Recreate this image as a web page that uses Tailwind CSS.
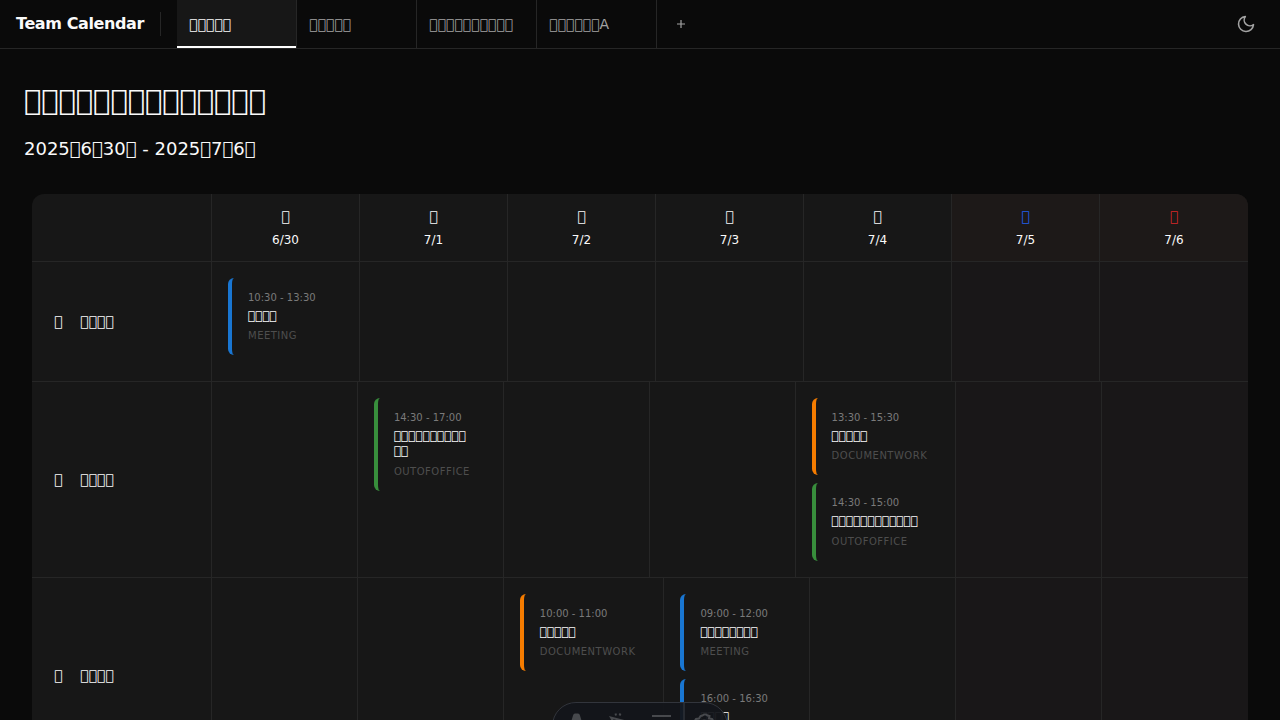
<!DOCTYPE html>
<html lang="ja">
<head>
<meta charset="utf-8">
<title>Team Calendar</title>
<script src="https://cdn.jsdelivr.net/npm/@tailwindcss/browser@4"></script>
</head>
<body class="h-[720px] overflow-hidden bg-[#0a0a0a] font-['DejaVu_Sans',sans-serif] text-[#fafafa]">
<header class="flex h-[49px] items-stretch border-b border-[#262626]">
  <div class="flex w-[177px] items-center pl-4">
    <h1 class="w-36 text-base font-bold tracking-tight">Team Calendar</h1>
    <span class="h-6 w-px bg-[#262626]"></span>
  </div>
  <nav class="flex text-sm text-[#a3a3a3]">
    <div class="relative flex w-[120px] items-center border-r border-[#262626] bg-[#171717] pl-3 text-[#fafafa]">&#x31400;&#x31400;&#x31400;&#x31400;&#x31400;<span class="absolute inset-x-0 bottom-0 h-0.5 bg-white"></span></div>
    <div class="flex w-[120px] items-center border-r border-[#262626] pl-3">&#x31400;&#x31400;&#x31400;&#x31400;&#x31400;</div>
    <div class="flex w-[120px] items-center border-r border-[#262626] pl-3">&#x31400;&#x31400;&#x31400;&#x31400;&#x31400;&#x31400;&#x31400;&#x31400;&#x31400;&#x31400;</div>
    <div class="flex w-[120px] items-center border-r border-[#262626] pl-3">&#x31400;&#x31400;&#x31400;&#x31400;&#x31400;&#x31400;A</div>
    <button class="flex w-12 items-center justify-center"><svg class="size-3.5" viewBox="0 0 14 14" stroke="currentColor" stroke-width="1.2"><path d="M7 3v8M3 7h8"/></svg></button>
  </nav>
  <button class="mr-6 ml-auto text-[#a3a3a3]"><svg class="size-5" viewBox="0 0 24 24" fill="none" stroke="currentColor" stroke-width="1.9" stroke-linecap="round" stroke-linejoin="round"><path d="M21 12.79A9 9 0 1 1 11.21 3 7 7 0 0 0 21 12.79z"/></svg></button>
</header>
<main>
  <h2 class="mt-[33px] ml-6 h-9 text-[28.8px] leading-9">&#x31400;&#x31400;&#x31400;&#x31400;&#x31400;&#x31400;&#x31400;&#x31400;&#x31400;&#x31400;&#x31400;&#x31400;&#x31400;&#x31400;</h2>
  <p class="mt-[17px] ml-6 h-7 text-lg leading-7">2025&#x31400;6&#x31400;30&#x31400; - 2025&#x31400;7&#x31400;6&#x31400;</p>
  <section class="mx-8 mt-[31px] overflow-hidden rounded-t-xl bg-[#171717]">
    <div class="grid h-[68px] grid-cols-[180px_repeat(7,148px)] border-b border-[#262626] text-center text-xs *:border-r *:border-[#262626] *:pt-3 *:last:border-r-0">
      <div></div>
      <div><p class="mb-1.5 text-sm">&#x31400;</p>6/30</div>
      <div><p class="mb-1.5 text-sm">&#x31400;</p>7/1</div>
      <div><p class="mb-1.5 text-sm">&#x31400;</p>7/2</div>
      <div><p class="mb-1.5 text-sm">&#x31400;</p>7/3</div>
      <div><p class="mb-1.5 text-sm">&#x31400;</p>7/4</div>
      <div class="bg-[#1d1918]"><p class="mb-1.5 text-sm text-[#2360ee]">&#x31400;</p>7/5</div>
      <div class="bg-[#1d1918]"><p class="mb-1.5 text-sm text-[#d62828]">&#x31400;</p>7/6</div>
    </div>
    <div class="grid h-[120px] grid-cols-[180px_repeat(7,148px)] border-b border-[#262626] *:border-r *:border-[#262626] *:last:border-r-0">
      <div class="flex items-center gap-[17.6px] pb-0.5 pl-[22px] text-sm"><span>&#x31400;</span><span>&#x31400;&#x31400;&#x31400;&#x31400;</span></div>
      <div class="p-4">
        <article class="h-[77px] rounded-md border-l-4 border-[#1976d2] pt-3 pl-4">
          <p class="text-[10px] leading-[15px] text-[#7a7a7a]">10:30 - 13:30</p><p class="mt-1 text-xs leading-[15px]">&#x31400;&#x31400;&#x31400;&#x31400;</p><p class="mt-1 text-[10px] leading-[15px] tracking-[0.5px] text-[#4e4e4e]">MEETING</p>
        </article>
      </div>
      <div></div><div></div><div></div><div></div><div class="bg-[#191718]"></div><div class="bg-[#191718]"></div>
    </div>
    <div class="grid h-[196px] grid-cols-[180px_145.9px_145.9px_145.9px_145.9px_160.6px_145.9px_145.9px] border-b border-[#262626] *:border-r *:border-[#262626] *:last:border-r-0">
      <div class="flex items-center gap-[17.6px] pb-0.5 pl-[22px] text-sm"><span>&#x31400;</span><span>&#x31400;&#x31400;&#x31400;&#x31400;</span></div>
      <div></div>
      <div class="p-4">
        <article class="h-[93px] rounded-md border-l-4 border-[#388e3c] pt-3 pl-4">
          <p class="text-[10px] leading-[15px] text-[#7a7a7a]">14:30 - 17:00</p><p class="mt-1 text-xs leading-[15px]">&#x31400;&#x31400;&#x31400;&#x31400;&#x31400;&#x31400;&#x31400;&#x31400;&#x31400;&#x31400;<br>&#x31400;&#x31400;</p><p class="mt-[5px] text-[10px] leading-[15px] tracking-[0.5px] text-[#4e4e4e]">OUTOFOFFICE</p>
        </article>
      </div>
      <div></div><div></div>
      <div class="flex flex-col gap-2 p-4">
        <article class="h-[77px] rounded-md border-l-4 border-[#f57c00] pt-3 pl-4">
          <p class="text-[10px] leading-[15px] text-[#7a7a7a]">13:30 - 15:30</p><p class="mt-1 text-xs leading-[15px]">&#x31400;&#x31400;&#x31400;&#x31400;&#x31400;</p><p class="mt-1 text-[10px] leading-[15px] tracking-[0.5px] text-[#4e4e4e]">DOCUMENTWORK</p>
        </article>
        <article class="h-[78px] rounded-md border-l-4 border-[#388e3c] pt-3 pl-4">
          <p class="text-[10px] leading-[15px] text-[#7a7a7a]">14:30 - 15:00</p><p class="mt-1 text-xs leading-[15px]">&#x31400;&#x31400;&#x31400;&#x31400;&#x31400;&#x31400;&#x31400;&#x31400;&#x31400;&#x31400;&#x31400;&#x31400;</p><p class="mt-[5px] text-[10px] leading-[15px] tracking-[0.5px] text-[#4e4e4e]">OUTOFOFFICE</p>
        </article>
      </div>
      <div class="bg-[#191718]"></div><div class="bg-[#191718]"></div>
    </div>
    <div class="grid h-[142px] grid-cols-[180px_145.9px_145.9px_160.6px_145.9px_145.9px_145.9px_145.9px] *:border-r *:border-[#262626] *:last:border-r-0">
      <div class="flex h-[196px] items-center gap-[17.6px] pb-0.5 pl-[22px] text-sm"><span>&#x31400;</span><span>&#x31400;&#x31400;&#x31400;&#x31400;</span></div>
      <div></div><div></div>
      <div class="p-4">
        <article class="h-[77px] rounded-md border-l-4 border-[#f57c00] pt-3 pl-4">
          <p class="text-[10px] leading-[15px] text-[#7a7a7a]">10:00 - 11:00</p><p class="mt-1 text-xs leading-[15px]">&#x31400;&#x31400;&#x31400;&#x31400;&#x31400;</p><p class="mt-1 text-[10px] leading-[15px] tracking-[0.5px] text-[#4e4e4e]">DOCUMENTWORK</p>
        </article>
      </div>
      <div class="flex flex-col gap-2 p-4">
        <article class="h-[77px] shrink-0 rounded-md border-l-4 border-[#1976d2] pt-3 pl-4">
          <p class="text-[10px] leading-[15px] text-[#7a7a7a]">09:00 - 12:00</p><p class="mt-1 text-xs leading-[15px]">&#x31400;&#x31400;&#x31400;&#x31400;&#x31400;&#x31400;&#x31400;&#x31400;</p><p class="mt-1 text-[10px] leading-[15px] tracking-[0.5px] text-[#4e4e4e]">MEETING</p>
        </article>
        <article class="h-[78px] shrink-0 rounded-md border-l-4 border-[#1976d2] pt-3 pl-4">
          <p class="text-[10px] leading-[15px] text-[#7a7a7a]">16:00 - 16:30</p><p class="mt-1 text-xs leading-[15px]">&#x31400;&#x31400;&#x31400;&#x31400;</p>
        </article>
      </div>
      <div></div><div class="bg-[#191718]"></div><div class="bg-[#191718]"></div>
    </div>
  </section>
</main>
<!-- Floating toolbar, partly below the fold -->
<div class="fixed top-[702px] left-[552px] flex h-12 w-[176px] rounded-full border border-[#32353c] bg-[#13151a]/95 text-[#47494d]">
  <svg class="h-12 w-[174px]" viewBox="0 0 174 48" fill="none" stroke="currentColor" stroke-width="2">
    <path d="M16 26l4-13.500q.5-2 2-2h3q1.500 0 2 2L31 26h-5l-1-5.500h-2.500l-1 5.500z" fill="currentColor" stroke="none"/>
    <path d="M73 18.500l-15-4 5 9M62.500 10.500l.5 2M67.500 10.500l-1 2"/>
    <path d="M99 13h19M110 19.500h8"/>
    <path d="M131 0v48" stroke="#262a31"/>
    <path d="M142 20v-2.500l1-1.500 3-.5 1.500-2.500 2-.5 1.500-1h2l1.500 1 2 .5L156 15.500l3 .5 1 1.500V20M147.500 20a4 4 0 0 1 7.500 0"/>
  </svg>
</div>
</body>
</html>
